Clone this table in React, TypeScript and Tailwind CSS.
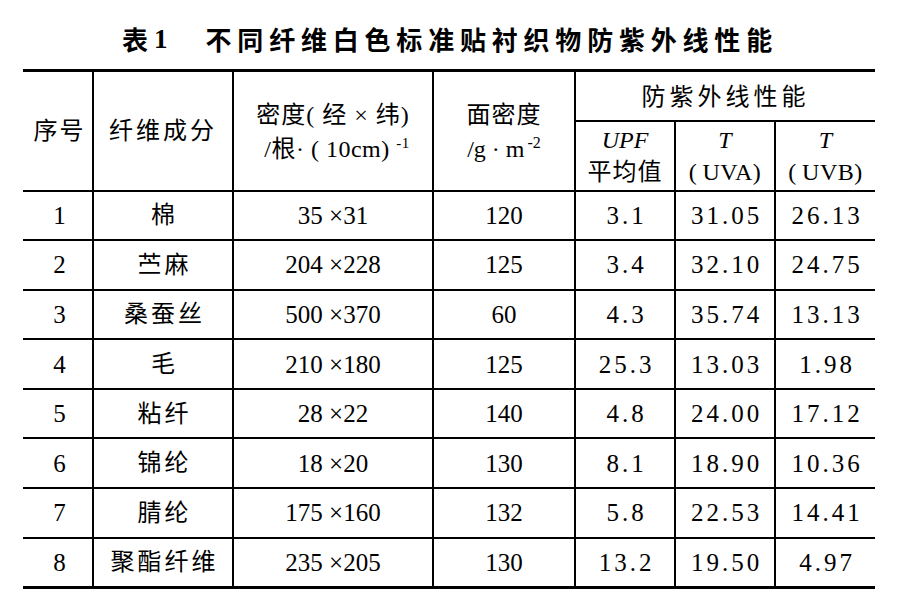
import React from 'react';

type Row = {
  no: string;
  fiber: string;
  density: string;
  area: string;
  upf: string;
  uva: string;
  uvb: string;
};

const rows: Row[] = [
  { no: '1', fiber: '棉', density: '35 ×31', area: '120', upf: '3.1', uva: '31.05', uvb: '26.13' },
  { no: '2', fiber: '苎麻', density: '204 ×228', area: '125', upf: '3.4', uva: '32.10', uvb: '24.75' },
  { no: '3', fiber: '桑蚕丝', density: '500 ×370', area: '60', upf: '4.3', uva: '35.74', uvb: '13.13' },
  { no: '4', fiber: '毛', density: '210 ×180', area: '125', upf: '25.3', uva: '13.03', uvb: '1.98' },
  { no: '5', fiber: '粘纤', density: '28 ×22', area: '140', upf: '4.8', uva: '24.00', uvb: '17.12' },
  { no: '6', fiber: '锦纶', density: '18 ×20', area: '130', upf: '8.1', uva: '18.90', uvb: '10.36' },
  { no: '7', fiber: '腈纶', density: '175 ×160', area: '132', upf: '5.8', uva: '22.53', uvb: '14.41' },
  { no: '8', fiber: '聚酯纤维', density: '235 ×205', area: '130', upf: '13.2', uva: '19.50', uvb: '4.97' },
];

const font = "font-['Liberation_Serif','Noto_Sans_CJK_SC',serif]";

export default function App() {
  return (
    <div className={`w-[918px] h-[602px] bg-white text-black ${font}`}>
      <div className="h-[69px] pt-[24px] flex justify-center items-start pr-[18px]">
        <div className="flex items-center leading-[30px] font-bold font-['Noto_Sans_CJK_SC',sans-serif]">
          <span className="text-[26px] tracking-[4px]">表</span>
          <span className="text-[27px] font-['Liberation_Serif',serif] ml-[2px]">1</span>
          <span className="text-[26px] tracking-[5.8px] ml-[38px]">不同纤维白色标准贴衬织物防紫外线性能</span>
        </div>
      </div>

      <table className="ml-[23px] w-[852px] table-fixed border-collapse text-[25px] leading-none">
        <colgroup>
          <col className="w-[70px]" />
          <col className="w-[140px]" />
          <col className="w-[200px]" />
          <col className="w-[142px]" />
          <col className="w-[100px]" />
          <col className="w-[100px]" />
          <col className="w-[100px]" />
        </colgroup>
        <thead>
          <tr className="h-[50px] border-t-[3px] border-black">
            <th rowSpan={2} className="font-normal border-r-2 border-b-2 border-black tracking-[2px] text-[24px] pl-[4px]">
              序号
            </th>
            <th rowSpan={2} className="font-normal border-r-2 border-b-2 border-black tracking-[3px] text-[24px]">
              纤维成分
            </th>
            <th rowSpan={2} className="font-normal border-r-2 border-b-2 border-black text-[24px] leading-[34px] pt-[2px]">
              <div className="tracking-[1px]">密度(&nbsp;经&nbsp;×&nbsp;纬)</div>
              <div className="pl-[8px] tracking-[0.5px]">
                /根·&nbsp;(&nbsp;10cm)&nbsp;<sup className="text-[15px] relative -top-[9px]">-1</sup>
              </div>
            </th>
            <th rowSpan={2} className="font-normal border-r-2 border-b-2 border-black text-[24px] leading-[34px] pt-[2px]">
              <div className="tracking-[1px]">面密度</div>
              <div>
                /g&nbsp;·&nbsp;m<sup className="text-[16px] ml-[3px] relative -top-[9px]">-2</sup>
              </div>
            </th>
            <th colSpan={3} className="font-normal border-b-2 border-black tracking-[4px] text-[24px] pt-[2px]">
              防紫外线性能
            </th>
          </tr>
          <tr className="h-[70px]">
            <th className="font-normal border-r-2 border-b-2 border-black text-[24px] leading-[32px]">
              <div className="italic">UPF</div>
              <div className="tracking-[1px]">平均值</div>
            </th>
            <th className="font-normal border-r-2 border-b-2 border-black text-[24px] leading-[32px]">
              <div className="italic">T</div>
              <div className="tracking-[0.5px]">(&thinsp;UVA)</div>
            </th>
            <th className="font-normal border-b-2 border-black text-[24px] leading-[32px]">
              <div className="italic">T</div>
              <div className="tracking-[0.5px]">(&thinsp;UVB)</div>
            </th>
          </tr>
        </thead>
        <tbody>
          {rows.map((r, i) => (
            <tr
              key={r.no}
              className={`h-[49.6px] ${i === rows.length - 1 ? 'border-b-[3px] border-black' : ''}`}
            >
              <td className="text-center border-r-2 border-b-2 border-black pl-[4px]">{r.no}</td>
              <td className="text-center border-r-2 border-b-2 border-black tracking-[3px] pl-[3px] text-[24px]">{r.fiber}</td>
              <td className="text-center border-r-2 border-b-2 border-black">{r.density}</td>
              <td className="text-center border-r-2 border-b-2 border-black">{r.area}</td>
              <td className="text-center border-r-2 border-b-2 border-black tracking-[3px] pl-[3px]">{r.upf}</td>
              <td className="text-center border-r-2 border-b-2 border-black tracking-[3px] pl-[3px]">{r.uva}</td>
              <td className="text-center border-b-2 border-black tracking-[3px] pl-[3px]">{r.uvb}</td>
            </tr>
          ))}
        </tbody>
      </table>
    </div>
  );
}
